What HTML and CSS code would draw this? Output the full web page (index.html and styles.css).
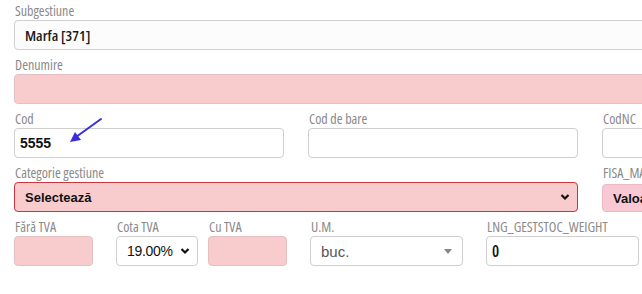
FILE: index.html
```html
<!DOCTYPE html>
<html>
<head>
	<meta charset="utf-8">
	<meta name="viewport" content="width=device-width, initial-scale=1">
	<title>Articol</title>
	<link rel="stylesheet" href="styles.css">
</head>
<body>
	<div class="form">
		<div class="row">
			<div class="group full">
				<label class="lbl">Subgestiune</label>
				<div class="box plain cond">Marfa [371]</div>
			</div>
		</div>
		<div class="row">
			<div class="group full">
				<label class="lbl">Denumire</label>
				<div class="box pink"></div>
			</div>
		</div>
		<div class="row">
			<div class="group col">
				<label class="lbl">Cod</label>
				<div class="box white code">5555</div>
				<svg class="arrow" width="40" height="30" viewBox="0 0 40 30">
					<line x1="35" y1="2" x2="10" y2="20" stroke="#3a2ed6" stroke-width="2" stroke-linecap="round"/>
					<path d="M4 25 L9 15 L15 23 Z" fill="#3a2ed6"/>
				</svg>
			</div>
			<div class="group col">
				<label class="lbl">Cod de bare</label>
				<div class="box white"></div>
			</div>
			<div class="group col">
				<label class="lbl">CodNC</label>
				<div class="box white"></div>
			</div>
		</div>
		<div class="row">
			<div class="group wide">
				<label class="lbl">Categorie gestiune</label>
				<div class="box sel red">
					<span>Selectează</span>
					<svg class="chev" width="10" height="8" viewBox="0 0 10 8"><path d="M1.5 2 L5 5.5 L8.5 2" fill="none" stroke="#111" stroke-width="2.2"/></svg>
				</div>
			</div>
			<div class="group col">
				<label class="lbl">FISA_MAGAZIE</label>
				<div class="box sel rose"><span>Valoare</span></div>
			</div>
		</div>
		<div class="row last">
			<div class="group small">
				<label class="lbl">Fără TVA</label>
				<div class="box pink"></div>
			</div>
			<div class="group cota">
				<label class="lbl">Cota TVA</label>
				<div class="box sel white">
					<span class="norm">19.00%</span>
					<svg class="chev" width="10" height="8" viewBox="0 0 10 8"><path d="M1.5 2 L5 5.5 L8.5 2" fill="none" stroke="#111" stroke-width="2.2"/></svg>
				</div>
			</div>
			<div class="group small">
				<label class="lbl">Cu TVA</label>
				<div class="box pink"></div>
			</div>
			<div class="group um">
				<label class="lbl">U.M.</label>
				<div class="box sel white">
					<span class="muted">buc.</span>
					<span class="tri"></span>
				</div>
			</div>
			<div class="group um">
				<label class="lbl">LNG_GESTSTOC_WEIGHT</label>
				<div class="box white num">0</div>
			</div>
		</div>
	</div>
</body>
</html>
```
FILE: styles.css
```css
body
{
	margin: 0;
	background: #fff;
	font-family: "Liberation Sans", Arial, sans-serif;
	overflow: hidden;
}
.form
{
	padding: 3px 0 0 14px;
	width: 800px;
}
.row
{
	display: flex;
	gap: 24px;
	margin-bottom: 7px;
}
.row.last { gap: 23px; }
.group
{
	position: relative;
	display: flex;
	flex-direction: column;
	flex-shrink: 0;
}
.full { width: 686px; }
.col { width: 270px; }
.wide { width: 564px; }
.small { width: 79px; }
.cota { width: 82px; margin-right: -13px; }
.um { width: 153px; }
.lbl
{
	font-family: "Open Sans", sans-serif;
	font-stretch: 75%;
	font-size: 14px;
	color: #8a8a8a;
	height: 17px;
	line-height: 16px;
	padding-left: 1px;
	white-space: nowrap;
}
.box
{
	box-sizing: border-box;
	height: 30px;
	border: 1px solid #cfcfcf;
	border-radius: 4px;
	padding: 0 10px;
	display: flex;
	align-items: center;
	font-size: 14px;
	color: #111;
}
.plain { background: #fcfcfc; }
.white { background: #fff; }
.pink
{
	background: #f8cbcd;
	border-color: #e4c0c2;
}
.red
{
	background: #f8cbcd;
	border-color: #c9343f;
}
.rose
{
	background: #f9c8d4;
	border-color: #ebbac6;
	height: 28px;
	margin-top: 2px;
}
.cond
{
	font-family: "Open Sans", sans-serif;
	font-stretch: 75%;
	font-weight: 600;
	font-size: 15px;
	color: #1c1c1c;
}
.code
{
	padding-left: 5px;
	font-weight: bold;
}
.num
{
	padding-left: 5px;
	font-family: "Open Sans", sans-serif;
	font-stretch: 75%;
	font-weight: 600;
	font-size: 16px;
}
.sel
{
	justify-content: space-between;
	font-weight: bold;
	font-size: 13px;
}
.sel .chev { margin-right: -3px; }
.norm
{
	font-weight: normal;
	font-size: 14px;
	letter-spacing: -0.3px;
}
.muted
{
	font-weight: normal;
	color: #555;
	font-size: 15px;
}
.tri
{
	width: 0;
	height: 0;
	border-left: 4px solid transparent;
	border-right: 4px solid transparent;
	border-top: 5px solid #888;
}
.arrow
{
	position: absolute;
	left: 52px;
	top: 6px;
}
```
